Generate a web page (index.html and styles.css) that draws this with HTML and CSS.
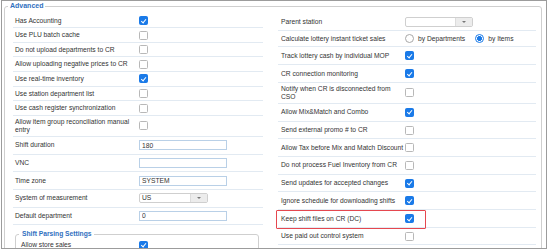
FILE: index.html
```html
<!DOCTYPE html>
<html>
<head>
<meta charset="utf-8">
<link rel="stylesheet" href="styles.css">
</head>
<body>
<div class="panel">
  <fieldset class="adv">
    <legend>Advanced</legend>
    <div class="cols">
      <div class="col left">
        <div class="row"><label class="lbl">Has Accounting</label><div class="ctl"><input class="cb" type="checkbox" checked></div></div>
        <div class="row"><label class="lbl">Use PLU batch cache</label><div class="ctl"><input class="cb" type="checkbox"></div></div>
        <div class="row"><label class="lbl">Do not upload departments to CR</label><div class="ctl"><input class="cb" type="checkbox"></div></div>
        <div class="row"><label class="lbl">Allow uploading negative prices to CR</label><div class="ctl"><input class="cb" type="checkbox"></div></div>
        <div class="row"><label class="lbl">Use real-time inventory</label><div class="ctl"><input class="cb" type="checkbox" checked></div></div>
        <div class="row"><label class="lbl">Use station department list</label><div class="ctl"><input class="cb" type="checkbox"></div></div>
        <div class="row"><label class="lbl">Use cash register synchronization</label><div class="ctl"><input class="cb" type="checkbox"></div></div>
        <div class="row two"><label class="lbl">Allow item group reconciliation manual entry</label><div class="ctl"><input class="cb" type="checkbox"></div></div>
        <div class="row inp"><label class="lbl">Shift duration</label><div class="ctl"><input class="txt" type="text" value="180"></div></div>
        <div class="row inp"><label class="lbl">VNC</label><div class="ctl"><input class="txt" type="text" value=""></div></div>
        <div class="row inp"><label class="lbl">Time zone</label><div class="ctl"><input class="txt" type="text" value="SYSTEM"></div></div>
        <div class="row inp"><label class="lbl">System of measurement</label><div class="ctl"><span class="sel us"><span class="val">US</span><span class="btn"><span class="tri"></span></span></span></div></div>
        <div class="row inp"><label class="lbl">Default department</label><div class="ctl"><input class="txt" type="text" value="0"></div></div>
        <fieldset class="sub">
          <legend>Shift Parsing Settings</legend>
          <div class="row subrow"><label class="lbl">Allow store sales</label><div class="ctl"><input class="cb" type="checkbox" checked></div></div>
        </fieldset>
      </div>
      <div class="col right">
        <div class="row r1"><label class="lbl">Parent station</label><div class="ctl"><span class="sel ps"><span class="val"></span><span class="btn"><span class="tri"></span></span></span></div></div>
        <div class="row r2"><label class="lbl">Calculate lottery instant ticket sales</label><div class="ctl radios"><label class="ropt"><input class="rd" type="radio" name="lot">by Departments</label><label class="ropt"><input class="rd" type="radio" name="lot" checked>by Items</label></div></div>
        <div class="row r3"><label class="lbl">Track lottery cash by individual MOP</label><div class="ctl"><input class="cb" type="checkbox" checked></div></div>
        <div class="row r3"><label class="lbl">CR connection monitoring</label><div class="ctl"><input class="cb" type="checkbox" checked></div></div>
        <div class="row two"><label class="lbl">Notify when CR is disconnected from CSO</label><div class="ctl"><input class="cb" type="checkbox"></div></div>
        <div class="row"><label class="lbl">Allow Mix&amp;Match and Combo</label><div class="ctl"><input class="cb" type="checkbox" checked></div></div>
        <div class="row"><label class="lbl">Send external promo # to CR</label><div class="ctl"><input class="cb" type="checkbox"></div></div>
        <div class="row"><label class="lbl">Allow Tax before Mix and Match Discount</label><div class="ctl"><input class="cb" type="checkbox"></div></div>
        <div class="row"><label class="lbl">Do not process Fuel Inventory from CR</label><div class="ctl"><input class="cb" type="checkbox"></div></div>
        <div class="row"><label class="lbl">Send updates for accepted changes</label><div class="ctl"><input class="cb" type="checkbox" checked></div></div>
        <div class="row"><label class="lbl">Ignore schedule for downloading shifts</label><div class="ctl"><input class="cb" type="checkbox" checked></div></div>
        <div class="row hl"><label class="lbl">Keep shift files on CR (DC)</label><div class="ctl"><input class="cb" type="checkbox" checked></div></div>
        <div class="row"><label class="lbl">Use paid out control system</label><div class="ctl"><input class="cb" type="checkbox"></div></div>
      </div>
    </div>
  </fieldset>
</div>
</body>
</html>
```
FILE: styles.css
```css
* { box-sizing: border-box; }
html, body { margin: 0; padding: 0; background: #fff; }
body {
  font-family: "Liberation Sans", Arial, sans-serif;
  font-size: 6.7px;
  color: #333;
}
.panel {
  margin: 0 3px 0 1px;
  height: 249px;
  border: 1px solid #9c9c9c;
  padding: 0 4px 0 2px;
  overflow: hidden;
}
fieldset {
  margin: 0;
  min-width: 0;
  border: 1px solid #cfcfcf;
  border-radius: 3px;
}
legend {
  font-weight: bold;
  color: #2f6fc0;
  line-height: 10px;
  padding: 0 2px;
}
.adv { padding: 0 5px 0 3px; }
.adv > legend { font-size: 7px; }
.cols {
  display: grid;
  grid-template-columns: 250px 1fr;
  column-gap: 15px;
  padding: 2.7px 0 0 5px;
}
.row {
  display: grid;
  align-items: center;
  border-bottom: 1px solid #e2eaf2;
  position: relative;
}
.lbl { line-height: 7.8px; }
.ctl { display: flex; align-items: center; }
.left .row { grid-template-columns: 124px 1fr; height: 14.6px; }
.left .lbl { padding: 0 2px; }
.left .ctl { padding-left: 2px; }
.left .row.two { height: 21px; }
.left .row.inp { height: 17.7px; }
.right .row { grid-template-columns: 127px 1fr; height: 17.7px; }
.right .lbl { padding-left: 3px; }
.right .row.r1 { height: 17.3px; }
.right .row.r2 { height: 16px; }
.right .row.r3 { height: 18px; }
.right .row.two { height: 21px; }

.cb {
  -webkit-appearance: none;
  appearance: none;
  margin: 0;
  width: 9px;
  height: 9px;
  border: 1px solid #b8b8b8;
  border-radius: 1.5px;
  background: #fff;
  position: relative;
  display: block;
}
.cb:checked { background: #1a7ae8; border-color: #1a7ae8; }
.cb:checked::after {
  content: "";
  position: absolute;
  left: 2.4px;
  top: 0.6px;
  width: 2px;
  height: 4.4px;
  border: solid #fff;
  border-width: 0 1.3px 1.3px 0;
  transform: rotate(40deg);
}
.radios { gap: 10px; }
.ropt { display: flex; align-items: center; gap: 4px; }
.rd {
  -webkit-appearance: none;
  appearance: none;
  margin: 0;
  width: 9px;
  height: 9px;
  border: 1px solid #a8a8a8;
  border-radius: 50%;
  background: #fff;
}
.rd:checked {
  border-color: #1a7ae8;
  background: radial-gradient(circle, #1a7ae8 0 2.2px, #fff 2.8px);
}
.txt {
  margin: 0;
  width: 88px;
  height: 10px;
  border: 1px solid #b9d0e7;
  padding: 0 2px;
  font: inherit;
  color: #333;
  outline: none;
}
.sel {
  display: flex;
  height: 10px;
  border: 1px solid #cfcfcf;
  border-radius: 2px;
  background: #fff;
  overflow: hidden;
}
.sel .val { flex: 1; padding-left: 2px; line-height: 8px; }
.sel .btn {
  width: 17px;
  background: #ececec;
  border-left: 1px solid #dcdcdc;
  display: flex;
  align-items: center;
  justify-content: center;
}
.tri {
  width: 0;
  height: 0;
  border-left: 2px solid transparent;
  border-right: 2px solid transparent;
  border-top: 2px solid #777;
}
.sel.us { width: 69px; }
.sel.ps { width: 68px; }

.sub {
  margin: 4px 4px 0 2px;
  padding: 0 4px 0 3px;
}
.sub > legend { font-size: 6.7px; padding: 0 3px; }
.left .row.subrow { grid-template-columns: 118px 1fr; height: 12px; border-bottom: none; }
.left .row.subrow .lbl { padding-left: 2px; }

.row.hl::after {
  content: "";
  position: absolute;
  left: -2px;
  top: 0px;
  width: 148px;
  bottom: -2px;
  border: 1.5px solid #e5474f;
  border-radius: 1px;
}
```
